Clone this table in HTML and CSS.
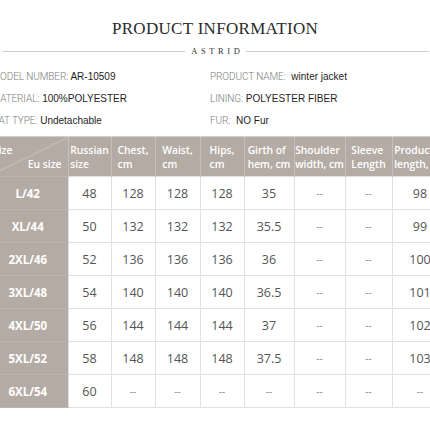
FILE: index.html
```html
<!DOCTYPE html>
<html>
<head>
<meta charset="utf-8">
<link rel="stylesheet" href="styles.css">
</head>
<body>
<div class="page">
  <header class="head">
    <h1 class="title">PRODUCT INFORMATION</h1>
    <div class="brand-row">
      <span class="rule"></span>
      <span class="brand">ASTRID</span>
      <span class="rule"></span>
    </div>
  </header>

  <section class="info">
    <div class="info-item"><span class="lbl">MODEL NUMBER:</span> <span class="val">AR-10509</span></div>
    <div class="info-item right"><span class="lbl">PRODUCT NAME:</span> <span class="val wide">winter jacket</span></div>
    <div class="info-item"><span class="lbl">MATERIAL:</span> <span class="val">100%POLYESTER</span></div>
    <div class="info-item right"><span class="lbl">LINING:</span> <span class="val">POLYESTER FIBER</span></div>
    <div class="info-item"><span class="lbl">HAT TYPE:</span> <span class="val">Undetachable</span></div>
    <div class="info-item right"><span class="lbl">FUR:</span> <span class="val wide">NO Fur</span></div>
  </section>

  <div class="table-wrap">
    <table class="sizes">
      <colgroup>
        <col class="c-size">
        <col class="c-ru">
        <col class="c-chest">
        <col class="c-waist">
        <col class="c-hips">
        <col class="c-hem">
        <col class="c-shoulder">
        <col class="c-sleeve">
        <col class="c-length">
      </colgroup>
      <thead>
        <tr>
          <th class="corner"><div class="corner-in"><span class="sz">Size</span><span class="eu">Eu size</span></div></th>
          <th><span class="hd">Russian<br>size</span></th>
          <th><span class="hd">Chest,<br>cm</span></th>
          <th><span class="hd">Waist,<br>cm</span></th>
          <th><span class="hd">Hips,<br>cm</span></th>
          <th><span class="hd">Girth of<br>hem, cm</span></th>
          <th><span class="hd">Shoulder<br>width, cm</span></th>
          <th><span class="hd">Sleeve<br>Length</span></th>
          <th><span class="hd">Product<br>length, cm</span></th>
        </tr>
      </thead>
      <tbody>
        <tr><th>L/42</th><td>48</td><td>128</td><td>128</td><td>128</td><td>35</td><td class="na">--</td><td class="na">--</td><td>98</td></tr>
        <tr><th>XL/44</th><td>50</td><td>132</td><td>132</td><td>132</td><td>35.5</td><td class="na">--</td><td class="na">--</td><td>99</td></tr>
        <tr><th>2XL/46</th><td>52</td><td>136</td><td>136</td><td>136</td><td>36</td><td class="na">--</td><td class="na">--</td><td>100</td></tr>
        <tr><th>3XL/48</th><td>54</td><td>140</td><td>140</td><td>140</td><td>36.5</td><td class="na">--</td><td class="na">--</td><td>101</td></tr>
        <tr><th>4XL/50</th><td>56</td><td>144</td><td>144</td><td>144</td><td>37</td><td class="na">--</td><td class="na">--</td><td>102</td></tr>
        <tr><th>5XL/52</th><td>58</td><td>148</td><td>148</td><td>148</td><td>37.5</td><td class="na">--</td><td class="na">--</td><td>103</td></tr>
        <tr><th>6XL/54</th><td>60</td><td class="na">--</td><td class="na">--</td><td class="na">--</td><td class="na">--</td><td class="na">--</td><td class="na">--</td><td class="na">--</td></tr>
      </tbody>
    </table>
  </div>
</div>
</body>
</html>
```

FILE: styles.css
```css
html, body {
  margin: 0;
  padding: 0;
  background: #ffffff;
  overflow: hidden;
}

.page {
  width: 430px;
  height: 430px;
  overflow: hidden;
}

.head {
  padding-top: 19px;
}

.title {
  margin: 0;
  font-family: "Liberation Serif", serif;
  font-weight: normal;
  font-size: 17px;
  line-height: 20px;
  letter-spacing: 0.3px;
  color: #2a2a2a;
  text-align: center;
}

.brand-row {
  margin-top: 6px;
  height: 12px;
  display: flex;
  align-items: center;
  gap: 6px;
  padding: 0 1px 0 2px;
}

.rule {
  flex: 1;
  height: 1px;
  background: #cfcfcf;
}

.brand {
  font-family: "Liberation Serif", serif;
  font-size: 8.5px;
  line-height: 12px;
  letter-spacing: 3.6px;
  margin-right: -3.6px;
  color: #333;
}

.info {
  margin-top: 9px;
  margin-left: -8.5px;
  display: grid;
  grid-template-columns: 218.5px 1fr;
  grid-auto-rows: 21.75px;
}

.info-item {
  font-family: "Liberation Sans", Arial, sans-serif;
  font-size: 10px;
  line-height: 21.75px;
  white-space: nowrap;
}

.lbl {
  font-family: Roboto, "Liberation Sans", sans-serif;
  font-weight: 300;
  font-size: 10px;
  letter-spacing: -0.1px;
  color: #7c7c7c;
}

.val {
  font-size: 10px;
  color: #1e1e1e;
}

.val.wide {
  margin-left: 3px;
}

.table-wrap {
  margin-top: 5px;
  margin-left: -12px;
  width: 470px;
}

.sizes {
  border-collapse: collapse;
  table-layout: fixed;
  width: 460px;
  font-family: "Open Sans", sans-serif;
}

.c-size { width: 80px; }
.c-ru { width: 43px; }
.c-chest { width: 44px; }
.c-waist { width: 45px; }
.c-hips { width: 44px; }
.c-hem { width: 50px; }
.c-shoulder { width: 51px; }
.c-sleeve { width: 47px; }
.c-length { width: 56px; }

.sizes thead tr {
  height: 40px;
}

.sizes thead th {
  background: #b4aba5;
  color: #ffffff;
  font-weight: 600;
  font-size: 10.3px;
  line-height: 14.5px;
  padding: 0;
  text-align: center;
  white-space: nowrap;
  border-left: 1px solid #c6bfba;
  border-top: 1px solid #d4cfcb;
}

.hd {
  display: inline-block;
  text-align: left;
  padding-top: 1px;
}

.sizes thead th.corner {
  border-left: none;
  background-color: #b4aba5;
  background-image: linear-gradient(to bottom right, transparent calc(50% - 0.7px), rgba(255,255,255,0.35) 50%, transparent calc(50% + 0.7px));
}

.corner-in {
  display: flex;
  flex-direction: column;
  padding: 1px 6px 0 5px;
}

.sz { align-self: flex-start; }
.eu { align-self: flex-end; }

.sizes tbody tr {
  height: 33px;
}

.sizes tbody th {
  background: #b4aba5;
  color: #ffffff;
  font-weight: 700;
  font-size: 11.5px;
  text-align: center;
  padding: 0;
  border-top: 1px solid #bcb4ae;
  border-bottom: 1px solid #bcb4ae;
}

.sizes tbody td {
  text-align: center;
  padding: 0;
  font-size: 12.5px;
  color: #555555;
  border: 1px solid #e0e0e0;
}

.sizes tbody td.na {
  font-size: 10px;
  color: #8a8a8a;
}
```
